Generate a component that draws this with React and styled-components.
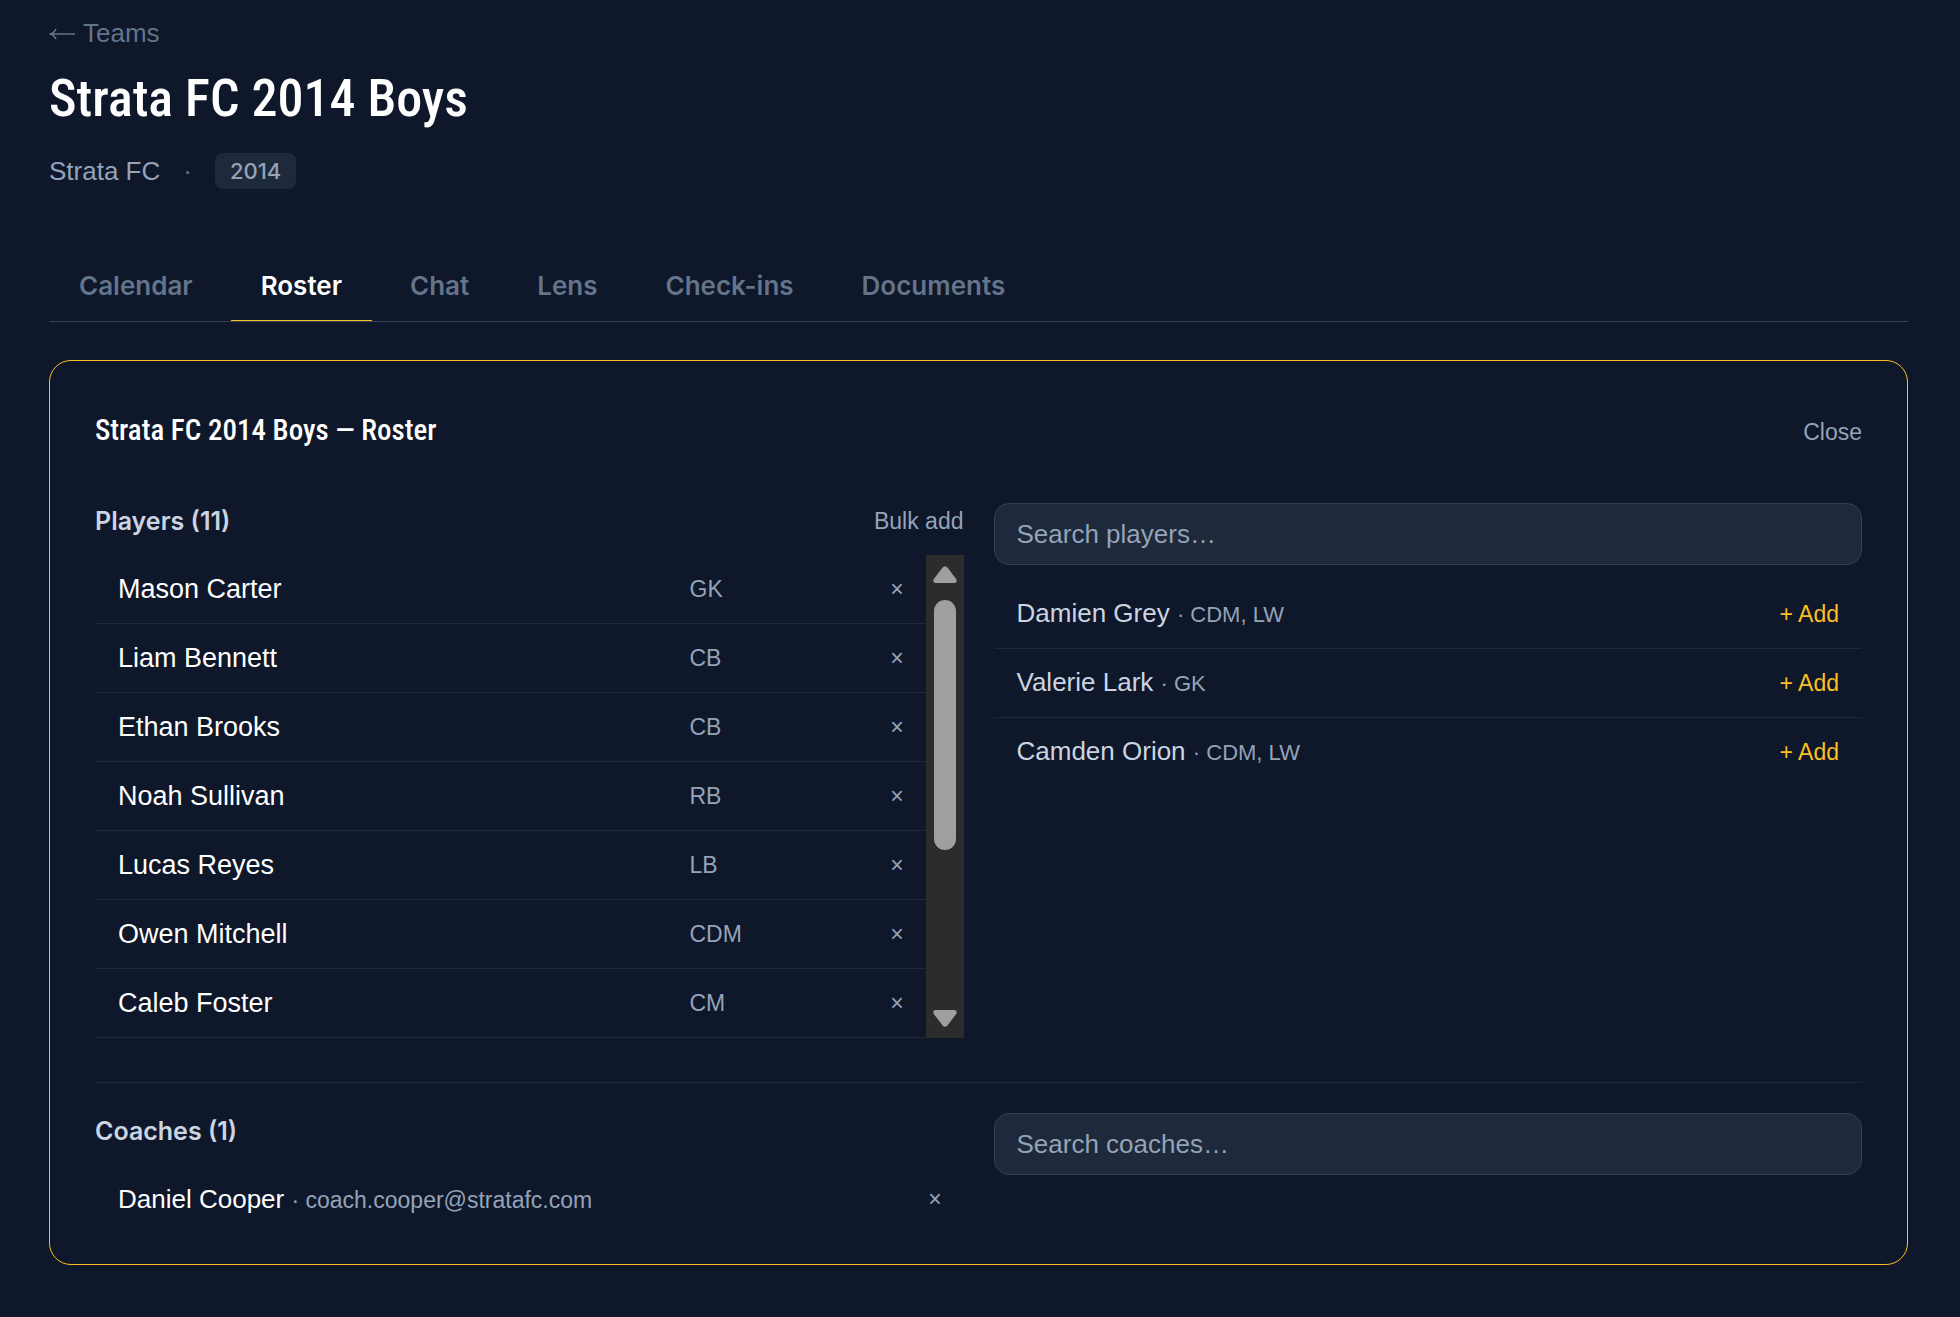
import React, { useRef, useState } from "react";
import styled, { createGlobalStyle } from "styled-components";

const color = {
  page: "#0f172a",
  panel: "#1e293b",
  line: "#334155",
  faint: "#64748b",
  muted: "#94a3b8",
  soft: "#cbd5e1",
  white: "#ffffff",
  accent: "#fbbf24",
};

const GlobalStyle = createGlobalStyle`
  *, *::before, *::after { box-sizing: border-box; }
  body {
    margin: 0;
    background: ${color.page};
    color: ${color.white};
    font-family: "Liberation Sans", sans-serif;
    font-size: 26px;
    line-height: 36px;
  }
  h1, h2, h3, p, ul { margin: 0; padding: 0; }
  ul { list-style: none; }
  button, input { font: inherit; }
`;

const displayFont = `"Roboto Condensed", Roboto, sans-serif`;
const strongFont = `Inter, "Liberation Sans", sans-serif`;

const Page = styled.main`
  min-height: 100vh;
  padding: 13px 52px 51px 49px;
`;

const BackLink = styled.a`
  display: inline-flex;
  align-items: center;
  gap: 8px;
  color: ${color.faint};
  text-decoration: none;
`;

const PageTitle = styled.h1`
  margin-top: 16px;
  font-family: ${displayFont};
  font-size: 52px;
  font-weight: 500;
  line-height: 64px;
`;

const Meta = styled.div`
  display: flex;
  align-items: center;
  gap: 23px;
  margin-top: 22px;
  color: ${color.muted};
`;

const Dot = styled.span`
  color: ${color.faint};
`;

const YearBadge = styled.span`
  padding: 0 15px;
  border-radius: 8px;
  background: ${color.panel};
  font-family: ${strongFont};
  font-size: 22px;
  font-weight: 500;
`;

const Tabs = styled.nav`
  display: flex;
  gap: 8px;
  margin-top: 64px;
  border-bottom: 1px solid ${color.line};
`;

const Tab = styled.a`
  padding: 15px 30px 16px;
  border-bottom: 1px solid ${(p) => (p.$active ? color.accent : "transparent")};
  color: ${(p) => (p.$active ? color.white : color.faint)};
  font-family: ${strongFont};
  font-weight: 600;
  text-decoration: none;
`;

const Card = styled.section`
  margin-top: 38px;
  padding: 43px 45px 30px;
  border: 1px solid ${color.accent};
  border-radius: 22px;
`;

const CardHeader = styled.header`
  display: flex;
  align-items: baseline;
  justify-content: space-between;
  margin-bottom: 47px;
`;

const CardTitle = styled.h2`
  font-family: ${displayFont};
  font-size: 29px;
  font-weight: 500;
  line-height: 52px;
`;

const TextButton = styled.button`
  padding: 0;
  border: 0;
  background: none;
  color: ${(p) => (p.$accent ? color.accent : color.muted)};
  font-size: 23px;
  line-height: 30px;
  cursor: pointer;
`;

const Columns = styled.div`
  display: grid;
  grid-template-columns: 1fr 1fr;
  gap: 30px;
`;

const CoachColumns = styled(Columns)`
  margin-top: 44px;
  padding-top: 30px;
  border-top: 1px solid ${color.panel};
`;

const ColumnHeader = styled.div`
  display: flex;
  align-items: center;
  justify-content: space-between;
  margin-bottom: 16px;
`;

const ColumnTitle = styled.h3`
  color: ${color.soft};
  font-family: ${strongFont};
  font-size: 25px;
  font-weight: 600;
`;

const ScrollArea = styled.div`
  display: flex;
  height: 483px;
`;

const PlayerList = styled.ul`
  flex: 1;
  overflow-y: auto;
  scrollbar-width: none;
`;

const Row = styled.li`
  display: flex;
  align-items: center;
  justify-content: space-between;
  height: 69px;
  padding: 0 23px;
  border-bottom: 1px solid ${color.panel};
  color: ${(p) => (p.$soft ? color.soft : color.white)};

  &:last-child { border-bottom-color: transparent; }
`;

const PlayerRow = styled(Row)`
  display: grid;
  grid-template-columns: 1fr 180px 11px;
  column-gap: 22px;
  font-size: 27px;
`;

const Detail = styled.span`
  color: ${color.muted};
  font-size: ${(p) => (p.$small ? 22 : 23)}px;
`;

const RemoveButton = styled(TextButton)`
  display: flex;
  justify-content: center;
  width: 11px;
`;

const Scrollbar = styled.div`
  display: flex;
  flex-direction: column;
  align-items: center;
  width: 38px;
  padding: 11px 0;
  gap: 17px;
  background: #2c2c2c;
`;

const ArrowButton = styled.button`
  display: block;
  width: 24px;
  height: 17px;
  padding: 0;
  border: 0;
  background: none;

  svg { display: block; }
`;

const Track = styled.div`
  flex: 1;
  width: 22px;
`;

const Thumb = styled.div`
  height: 250px;
  border-radius: 11px;
  background: #9f9f9f;
`;

const SearchInput = styled.input`
  display: block;
  width: 100%;
  height: 62px;
  padding: 0 22px;
  border: 1px solid ${color.line};
  border-radius: 15px;
  background: ${color.panel};
  color: ${color.white};
  outline: none;

  &::placeholder { color: ${color.muted}; opacity: 1; }
`;

const Results = styled.ul`
  padding-top: 15px;
`;

const tabs = ["Calendar", "Roster", "Chat", "Lens", "Check-ins", "Documents"];

const players = [
  ["Mason Carter", "GK"],
  ["Liam Bennett", "CB"],
  ["Ethan Brooks", "CB"],
  ["Noah Sullivan", "RB"],
  ["Lucas Reyes", "LB"],
  ["Owen Mitchell", "CDM"],
  ["Caleb Foster", "CM"],
  ["", ""],
  ["", ""],
  ["", ""],
  ["", ""],
];

const available = [
  ["Damien Grey", "CDM, LW"],
  ["Valerie Lark", "GK"],
  ["Camden Orion", "CDM, LW"],
];

function Arrow({ down }) {
  return (
    <svg width="24" height="17" viewBox="0 0 24 17" aria-hidden="true">
      <path
        d="M9.4 1.8Q12-1.2 14.6 1.8L23.2 13Q25 17 21 17H3Q-1 17 .8 13Z"
        fill="#9f9f9f"
        transform={down ? "rotate(180 12 8.5)" : undefined}
      />
    </svg>
  );
}

function ScrollingPlayers() {
  const list = useRef(null);
  const [progress, setProgress] = useState(0);
  const onScroll = (e) => {
    const el = e.currentTarget;
    setProgress(el.scrollTop / (el.scrollHeight - el.clientHeight));
  };
  const step = (amount) => list.current.scrollBy({ top: amount });

  return (
    <ScrollArea>
      <PlayerList ref={list} onScroll={onScroll}>
        {players.map(([name, position], i) => (
          <PlayerRow key={i}>
            <span>{name}</span>
            <Detail>{position}</Detail>
            {name && <RemoveButton aria-label={`Remove ${name}`}>×</RemoveButton>}
          </PlayerRow>
        ))}
      </PlayerList>
      <Scrollbar>
        <ArrowButton aria-label="Scroll up" onClick={() => step(-69)}>
          <Arrow />
        </ArrowButton>
        <Track>
          <Thumb style={{ transform: `translateY(${progress * 143}px)` }} />
        </Track>
        <ArrowButton aria-label="Scroll down" onClick={() => step(69)}>
          <Arrow down />
        </ArrowButton>
      </Scrollbar>
    </ScrollArea>
  );
}

export default function App() {
  return (
    <>
      <GlobalStyle />
      <Page>
        <BackLink href="#teams">
          <svg width="26" height="14" viewBox="0 0 26 14" fill="none" stroke="currentColor" strokeWidth="1.6" aria-hidden="true">
            <path d="M26 8H2M7 3Q5 7 1.5 8Q5 9 7 13" />
          </svg>
          Teams
        </BackLink>
        <PageTitle>Strata FC 2014 Boys</PageTitle>
        <Meta>
          <span>Strata FC</span>
          <Dot>·</Dot>
          <YearBadge>2014</YearBadge>
        </Meta>

        <Tabs aria-label="Team sections">
          {tabs.map((name) => (
            <Tab key={name} href={`#${name.toLowerCase()}`} $active={name === "Roster"}>
              {name}
            </Tab>
          ))}
        </Tabs>

        <Card>
          <CardHeader>
            <CardTitle>Strata FC 2014 Boys — Roster</CardTitle>
            <TextButton>Close</TextButton>
          </CardHeader>

          <Columns>
            <div>
              <ColumnHeader>
                <ColumnTitle>Players (11)</ColumnTitle>
                <TextButton>Bulk add</TextButton>
              </ColumnHeader>
              <ScrollingPlayers />
            </div>
            <div>
              <SearchInput type="search" aria-label="Search players" placeholder="Search players…" />
              <Results>
                {available.map(([name, positions]) => (
                  <Row key={name} $soft>
                    <span>
                      {name} <Detail $small>· {positions}</Detail>
                    </span>
                    <TextButton $accent>+ Add</TextButton>
                  </Row>
                ))}
              </Results>
            </div>
          </Columns>

          <CoachColumns>
            <div>
              <ColumnHeader>
                <ColumnTitle>Coaches (1)</ColumnTitle>
              </ColumnHeader>
              <ul>
                <Row>
                  <span>
                    Daniel Cooper <Detail>· coach.cooper@stratafc.com</Detail>
                  </span>
                  <RemoveButton aria-label="Remove Daniel Cooper">×</RemoveButton>
                </Row>
              </ul>
            </div>
            <div>
              <SearchInput type="search" aria-label="Search coaches" placeholder="Search coaches…" />
            </div>
          </CoachColumns>
        </Card>
      </Page>
    </>
  );
}
